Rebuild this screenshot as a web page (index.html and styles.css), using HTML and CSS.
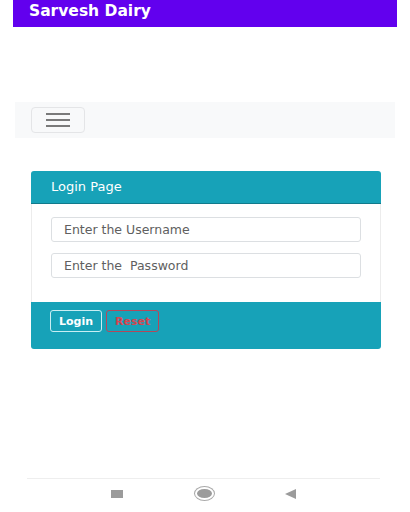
FILE: index.html
```html
<!DOCTYPE html>
<html lang="en">
<head>
    <meta charset="UTF-8">
    <meta name="viewport" content="width=device-width, initial-scale=1.0">
    <title>Sarvesh Dairy</title>
    <link rel="stylesheet" href="styles.css">
</head>
<body>
    <header class="app-bar">
        <h1>Sarvesh Dairy</h1>
    </header>

    <nav class="navbar">
        <button class="toggler" type="button">
            <span></span><span></span><span></span>
        </button>
    </nav>

    <div class="card">
        <div class="card-header">Login Page</div>
        <div class="card-body">
            <input type="text" placeholder="Enter the Username">
            <input type="password" placeholder="Enter the &nbsp;Password">
        </div>
        <div class="card-footer">
            <button class="btn btn-login" type="button">Login</button>
            <button class="btn btn-reset" type="button">Reset</button>
        </div>
    </div>

    <footer class="sys-nav">
        <span class="nav-square"></span>
        <span class="nav-circle"></span>
        <span class="nav-back"></span>
    </footer>
</body>
</html>
```

FILE: styles.css
```css
body {
    font-family: 'DejaVu Sans', Verdana, sans-serif;
    margin: 0;
    padding: 0;
    background-color: #fff;
    color: #333;
    width: 410px;
    height: 512px;
    display: flex;
    flex-direction: column;
}
.app-bar {
    background-color: #6200ee;
    height: 27px;
    margin: 0 13px;
    padding: 0 16px;
    display: flex;
    align-items: center;
}
.app-bar h1 {
    margin: 0;
    color: #fff;
    font-size: 15.5px;
    font-weight: bold;
    line-height: 1;
    padding-bottom: 4px;
}
.navbar {
    background-color: #f8f9fa;
    margin: 75px 15px 0;
    height: 36px;
    padding: 5px 16px;
    box-sizing: border-box;
}
.toggler {
    width: 54px;
    height: 26px;
    background: #f8f9fa;
    border: 1px solid #e4e5e7;
    border-radius: 4px;
    display: flex;
    flex-direction: column;
    align-items: center;
    justify-content: center;
    gap: 4px;
    padding: 0;
}
.toggler span {
    display: block;
    width: 24px;
    height: 2px;
    background-color: #7a7a7a;
}
.card {
    margin: 33px 29px 0 31px;
    border-radius: 3px;
    overflow: hidden;
}
.card-header {
    background-color: #17a2b8;
    color: #fff;
    font-size: 13px;
    height: 32px;
    line-height: 32px;
    padding: 0 20px;
    border-bottom: 1px solid #117a8b;
}
.card-body {
    padding: 13px 19px 24px;
    display: flex;
    flex-direction: column;
    gap: 11px;
    border-left: 1px solid #ececec;
    border-right: 1px solid #ececec;
}
.card-body input {
    height: 25px;
    box-sizing: border-box;
    border: 1px solid #dcdfe2;
    border-radius: 3px;
    padding: 0 12px;
    font-family: 'DejaVu Sans', Verdana, sans-serif;
    font-size: 12.5px;
    color: #333;
    outline: none;
}
.card-body input::placeholder {
    color: #606060;
}
.card-footer {
    background-color: #17a2b8;
    height: 47px;
    padding: 8px 19px 0;
    box-sizing: border-box;
    display: flex;
    align-items: flex-start;
    gap: 4px;
}
.btn {
    height: 22px;
    padding: 0 8px;
    font-family: 'DejaVu Sans', Verdana, sans-serif;
    font-size: 11px;
    font-weight: bold;
    border-radius: 3px;
    background: transparent;
}
.btn-login {
    color: #fff;
    border: 1px solid #c8eef3;
    width: 52px;
}
.btn-reset {
    color: #d9454f;
    border: 1px solid #b4485a;
    width: 53px;
}
.sys-nav {
    margin: auto 30px 0 27px;
    border-top: 1px solid #eeeeee;
    height: 34px;
    display: flex;
    align-items: center;
    justify-content: space-between;
    padding: 0 84px 4px 84px;
    box-sizing: border-box;
}
.nav-square {
    width: 12px;
    height: 8px;
    background-color: #9b9b9b;
}
.nav-circle {
    width: 15px;
    height: 9px;
    border-radius: 50%;
    background-color: #9b9b9b;
    border: 2px solid #fff;
    box-shadow: 0 0 0 1px #aaa;
}
.nav-back {
    width: 0;
    height: 0;
    border-top: 5px solid transparent;
    border-bottom: 5px solid transparent;
    border-right: 11px solid #9b9b9b;
}
```
